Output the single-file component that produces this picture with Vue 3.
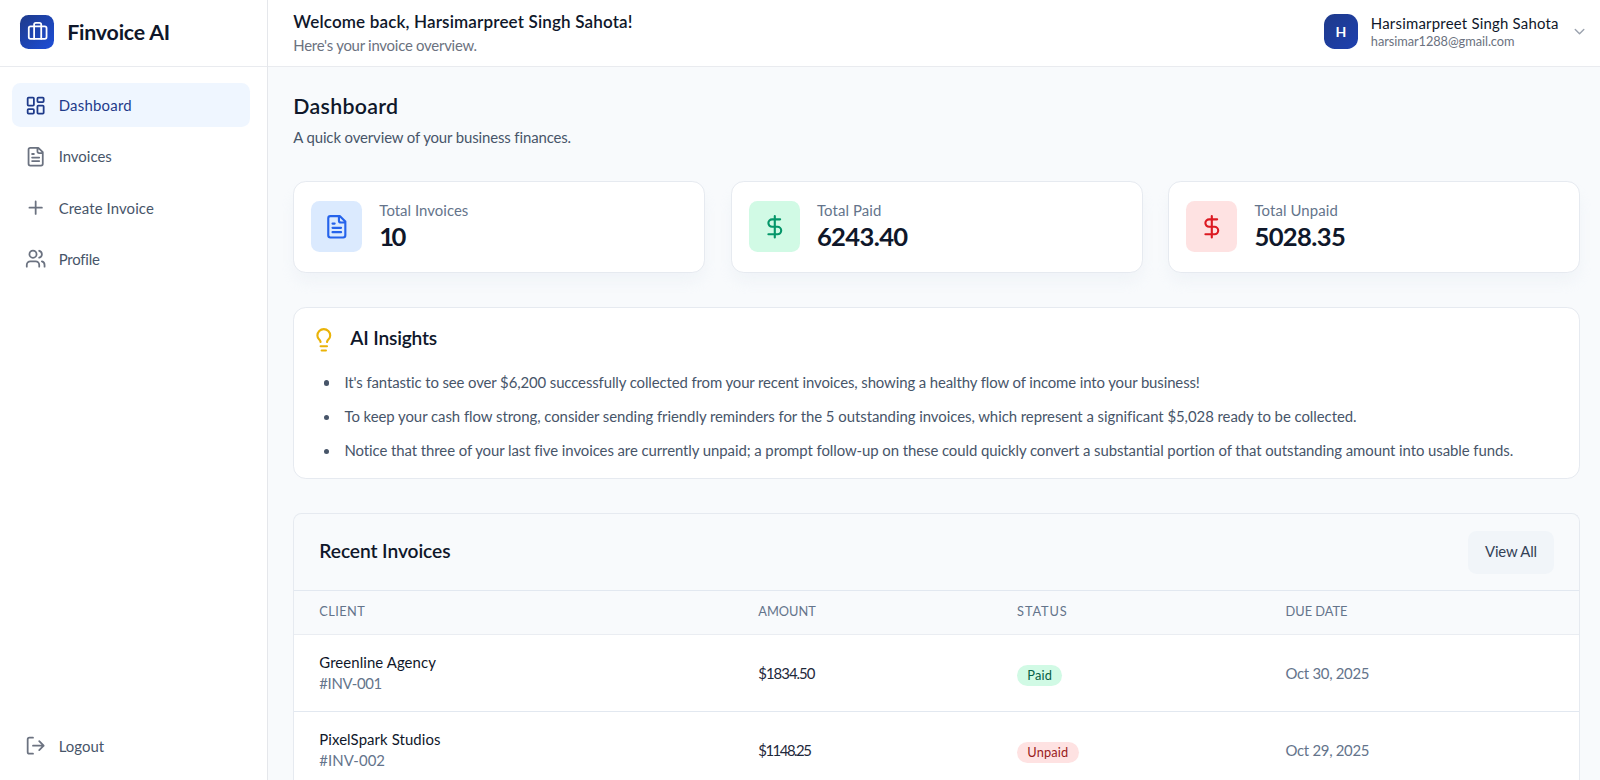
<script setup>
const nav = [
  { key: 'dash', label: 'Dashboard', active: true },
  { key: 'file', label: 'Invoices' },
  { key: 'plus', label: 'Create Invoice' },
  { key: 'users', label: 'Profile' }
]
const stats = [
  { key: 'total', label: 'Total Invoices', value: '10' },
  { key: 'paid', label: 'Total Paid', value: '6243.40' },
  { key: 'unpaid', label: 'Total Unpaid', value: '5028.35' }
]
const insights = [
  "It's fantastic to see over $6,200 successfully collected from your recent invoices, showing a healthy flow of income into your business!",
  'To keep your cash flow strong, consider sending friendly reminders for the 5 outstanding invoices, which represent a significant $5,028 ready to be collected.',
  'Notice that three of your last five invoices are currently unpaid; a prompt follow-up on these could quickly convert a substantial portion of that outstanding amount into usable funds.'
]
const rows = [
  { client: 'Greenline Agency', no: '#INV-001', amount: '$1834.50', status: 'Paid', due: 'Oct 30, 2025' },
  { client: 'PixelSpark Studios', no: '#INV-002', amount: '$1148.25', status: 'Unpaid', due: 'Oct 29, 2025' }
]
</script>

<template>
  <div class="app">
    <aside class="sidebar">
      <div class="brand">
        <span class="logo">
          <svg class="ic" viewBox="0 0 24 24"><path d="M16 20V4a2 2 0 0 0-2-2h-4a2 2 0 0 0-2 2v16" /><rect width="20" height="14" x="2" y="6" rx="2" /></svg>
        </span>
        <span class="brand-name">Finvoice AI</span>
      </div>
      <nav class="nav">
        <a v-for="n in nav" :key="n.key" class="nav-item" :class="[n.key, { active: n.active }]">
          <svg class="ic" viewBox="0 0 24 24">
            <template v-if="n.key === 'dash'">
              <rect width="7" height="9" x="3" y="3" rx="1" /><rect width="7" height="5" x="14" y="3" rx="1" />
              <rect width="7" height="9" x="14" y="12" rx="1" /><rect width="7" height="5" x="3" y="16" rx="1" />
            </template>
            <path v-else-if="n.key === 'file'" d="M15 2H6a2 2 0 0 0-2 2v16a2 2 0 0 0 2 2h12a2 2 0 0 0 2-2V7ZM14 2v4a2 2 0 0 0 2 2h4M10 9H8M16 13H8M16 17H8" />
            <path v-else-if="n.key === 'plus'" d="M5 12h14M12 5v14" />
            <template v-else>
              <path d="M16 21v-2a4 4 0 0 0-4-4H6a4 4 0 0 0-4 4v2M16 3.128a4 4 0 0 1 0 7.744M22 21v-2a4 4 0 0 0-3-3.87" /><circle cx="9" cy="7" r="4" />
            </template>
          </svg>
          <span>{{ n.label }}</span>
        </a>
      </nav>
      <a class="nav-item logout">
        <svg class="ic" viewBox="0 0 24 24"><path d="m16 17 5-5-5-5M21 12H9M9 21H5a2 2 0 0 1-2-2V5a2 2 0 0 1 2-2h4" /></svg>
        <span>Logout</span>
      </a>
    </aside>

    <div class="content">
      <header class="topbar">
        <div>
          <div class="welcome">Welcome back, Harsimarpreet Singh Sahota!</div>
          <div class="welcome-sub">Here's your invoice overview.</div>
        </div>
        <div class="user">
          <span class="avatar">H</span>
          <div class="user-text">
            <div class="user-name">Harsimarpreet Singh Sahota</div>
            <div class="user-mail">harsimar1288@gmail.com</div>
          </div>
          <svg class="ic chevron" viewBox="0 0 24 24"><path d="m6 9 6 6 6-6" /></svg>
        </div>
      </header>

      <main class="main">
        <h1>Dashboard</h1>
        <p class="lead">A quick overview of your business finances.</p>

        <section class="stats">
          <div v-for="s in stats" :key="s.key" class="card stat" :class="s.key">
            <span class="stat-icon">
              <svg class="ic" viewBox="0 0 24 24">
                <path v-if="s.key === 'total'" d="M15 2H6a2 2 0 0 0-2 2v16a2 2 0 0 0 2 2h12a2 2 0 0 0 2-2V7ZM14 2v4a2 2 0 0 0 2 2h4M10 9H8M16 13H8M16 17H8" />
                <path v-else d="M12 2v20M17 5H9.5a3.5 3.5 0 0 0 0 7h5a3.5 3.5 0 0 1 0 7H6" />
              </svg>
            </span>
            <div>
              <div class="stat-label">{{ s.label }}</div>
              <div class="stat-value">{{ s.value }}</div>
            </div>
          </div>
        </section>

        <section class="card insights">
          <div class="insights-head">
            <svg class="ic" viewBox="0 0 24 24"><path d="M15 14c.2-1 .7-1.7 1.5-2.5 1-.9 1.5-2.2 1.5-3.5A6 6 0 0 0 6 8c0 1 .2 2.2 1.5 3.5.7.7 1.3 1.5 1.5 2.5M9 18h6M10 22h4" /></svg>
            <h2>AI Insights</h2>
          </div>
          <ul>
            <li v-for="(t, i) in insights" :key="i"><span>{{ t }}</span></li>
          </ul>
        </section>

        <section class="recent">
          <div class="recent-head">
            <h2>Recent Invoices</h2>
            <button type="button">View All</button>
          </div>
          <div class="row head">
            <span class="h-client">Client</span><span class="h-amount">Amount</span><span class="h-status">Status</span><span class="h-due">Due Date</span>
          </div>
          <div v-for="r in rows" :key="r.no" class="row">
            <div>
              <div class="client">{{ r.client }}</div>
              <div class="number">{{ r.no }}</div>
            </div>
            <div class="amount">{{ r.amount }}</div>
            <div><span class="badge" :class="r.status.toLowerCase()">{{ r.status }}</span></div>
            <div class="due">{{ r.due }}</div>
          </div>
        </section>
      </main>
    </div>
  </div>
</template>

<style>
body { margin: 0; overflow: hidden; }
</style>

<style scoped>
* { box-sizing: border-box; }
.app {
  display: flex;
  width: 100%;
  height: 780px;
  overflow: hidden;
  background: #f8fafc;
  color: #0f172a;
  font-family: Lato, "Open Sans", sans-serif;
  font-size: 14.93px;
  line-height: 21.33px;
}
.ic {
  display: block;
  flex: none;
  width: 21.33px;
  height: 21.33px;
  fill: none;
  stroke: currentColor;
  stroke-width: 2;
  stroke-linecap: round;
  stroke-linejoin: round;
}
h1, h2, p, ul { margin: 0; padding: 0; }

.sidebar {
  display: flex;
  flex-direction: column;
  flex: none;
  width: 268px;
  background: #fff;
  border-right: 1px solid #e5e7eb;
}
.brand {
  display: flex;
  align-items: center;
  flex: none;
  height: 67px;
  padding: 0 0 2px 20.3px;
  border-bottom: 1px solid #e9ebef;
}
.logo {
  display: flex;
  align-items: center;
  justify-content: center;
  width: 34.13px;
  height: 34.13px;
  border-radius: 8.5px;
  background: linear-gradient(135deg, #1e3a8a, #1d4ed8);
  color: #fff;
}
.logo .ic { margin-top: -1px; }
.brand-name {
  margin-left: 12.8px;
  padding-top: 1px;
  font-size: 21.33px;
  font-weight: 700;
  letter-spacing: -0.2px;
}
.nav {
  display: flex;
  flex-direction: column;
  gap: 7.1px;
  padding: 16.3px 17px 0 12px;
}
.nav-item {
  display: flex;
  align-items: center;
  gap: 12.5px;
  height: 44px;
  padding: 0 12.8px;
  border-radius: 8.5px;
  color: #475569;
}
.nav-item span { padding-top: 1.5px; }
.nav-item .ic { color: #6b7280; }
.nav-item.dash { letter-spacing: 0.25px; }
.nav-item.plus { letter-spacing: 0.1px; }
.nav-item.users { letter-spacing: -0.2px; }
.nav-item.active { background: #eff6ff; color: #1e3a8a; }
.nav-item.active .ic { color: #1e3a8a; }
.logout { margin: auto 17px 12px 12px; letter-spacing: 0.05px; }

.content { flex: 1; min-width: 0; }
.topbar {
  display: flex;
  align-items: flex-start;
  justify-content: space-between;
  height: 67px;
  padding: 9.5px 11.5px 0 25.3px;
  background: #fff;
  border-bottom: 1px solid #e9ebef;
}
.welcome { padding-top: 0.5px; font-size: 17.07px; line-height: 24px; font-weight: 600; letter-spacing: 0.14px; }
.welcome-sub { margin-top: 1px; color: #6b7280; letter-spacing: -0.25px; }
.user { display: flex; align-items: center; height: 44px; }
.avatar {
  display: flex;
  align-items: center;
  justify-content: center;
  width: 34.13px;
  height: 34.13px;
  border-radius: 10.67px;
  background: linear-gradient(135deg, #1e3a8a, #1e40af);
  color: #fff;
  font-size: 14px;
  font-weight: 700;
}
.user-text { width: 188px; margin: 0 12.6px 0 12.8px; padding-top: 1px; }
.user-name { line-height: 19px; letter-spacing: 0.22px; white-space: nowrap; }
.user-mail { font-size: 12.8px; line-height: 17px; color: #6b7280; letter-spacing: -0.07px; }
.chevron { width: 17.07px; height: 17.07px; color: #9ca3af; }

.main { padding: 25px 19.6px 0 25.3px; }
h1 { font-size: 21.33px; line-height: 29.4px; font-weight: 600; letter-spacing: 0.3px; }
.lead { margin-top: 5.3px; color: #475569; letter-spacing: -0.12px; }

.card {
  background: #fff;
  border: 1px solid #e6eaf0;
  border-radius: 12.8px;
}
.stats {
  display: grid;
  grid-template-columns: repeat(3, 1fr);
  gap: 25.6px;
  margin-top: 33px;
}
.stat {
  display: flex;
  align-items: center;
  height: 91.6px;
  padding: 0 17.07px;
  box-shadow: 0 10px 16px -3px rgba(226, 232, 240, 0.4);
}
.stat-icon {
  display: flex;
  align-items: center;
  justify-content: center;
  width: 51px;
  height: 51px;
  margin-right: 17px;
  border-radius: 8.5px;
}
.stat-icon .ic { width: 25.6px; height: 25.6px; }
.total .stat-icon { background: #dbeafe; color: #2563eb; }
.paid .stat-icon { background: #d1fae5; color: #059669; }
.unpaid .stat-icon { background: #fee2e2; color: #dc1a22; }
.stat-label { color: #64748b; letter-spacing: 0.1px; }
.total .stat-label { letter-spacing: 0.03px; }
.stat-value { padding-bottom: 2px; font-size: 25.6px; line-height: 31px; font-weight: 700; letter-spacing: -0.65px; }
.total .stat-value { letter-spacing: -2.8px; }

.insights {
  height: 172px;
  margin-top: 34px;
  padding: 19px 17.07px 0;
}
.insights-head { display: flex; align-items: center; height: 25.6px; }
.insights-head .ic { width: 25.6px; height: 25.6px; color: #eab308; }
h2 { padding-bottom: 2px; font-size: 19.2px; line-height: 26px; font-weight: 600; letter-spacing: -0.08px; }
.insights h2 { margin-left: 13.4px; letter-spacing: -0.2px; }
.insights ul {
  display: grid;
  gap: 12.8px;
  margin: 19.7px 0 0 12.3px;
  list-style: none;
  color: #475569;
  letter-spacing: -0.11px;
  white-space: nowrap;
}
.insights li { display: flex; align-items: center; gap: 15.6px; }
.insights li::before {
  content: "";
  width: 5.2px;
  height: 5.2px;
  margin-top: 1px;
  border-radius: 50%;
  background: currentColor;
}
.insights li:nth-child(2) { letter-spacing: -0.05px; }
.insights li:nth-child(3) { letter-spacing: -0.077px; }

.recent {
  margin-top: 34.4px;
  border: 1px solid #e6eaf0;
  border-bottom: 0;
  border-radius: 8.5px 8.5px 0 0;
}
.recent-head {
  display: flex;
  align-items: center;
  justify-content: space-between;
  height: 77px;
  padding: 0 25.3px 0 25px;
  border-bottom: 1px solid #e2e8f0;
}
button {
  width: 86.3px;
  height: 43px;
  padding: 0;
  border: 0;
  border-radius: 8.5px;
  background: #f1f5f9;
  color: #334155;
  font: inherit;
  letter-spacing: -0.18px;
}
.row {
  display: grid;
  grid-template-columns: 439px 258.8px 268.4px 1fr;
  align-items: center;
  height: 77.3px;
  padding-left: 25px;
  background: #fff;
  border-bottom: 1px solid #e2e8f0;
}
.row.head {
  height: 44px;
  padding-bottom: 1px;
  background: #f8fafc;
  border-bottom-color: #eaedf2;
  color: #64748b;
  font-size: 12.8px;
  text-transform: uppercase;
}
.h-client { letter-spacing: 0.41px; }
.h-amount, .h-due { letter-spacing: 0; }
.h-status { letter-spacing: 0.85px; }
.client { letter-spacing: 0.08px; }
.number { color: #64748b; letter-spacing: -0.36px; }
.row:last-child .number { letter-spacing: 0.05px; }
.amount { color: #1e293b; letter-spacing: -1px; }
.row:last-child .amount { letter-spacing: -1.5px; }
.due { color: #64748b; letter-spacing: -0.3px; }
.badge {
  display: block;
  width: max-content;
  margin-top: 4px;
  padding: 0 10.2px;
  border-radius: 11px;
  font-size: 12.8px;
  line-height: 21.33px;
  letter-spacing: 0.15px;
}
.badge.paid { background: #d1fae5; color: #065f46; }
.badge.unpaid { background: #fee2e2; color: #991b1b; }
</style>
